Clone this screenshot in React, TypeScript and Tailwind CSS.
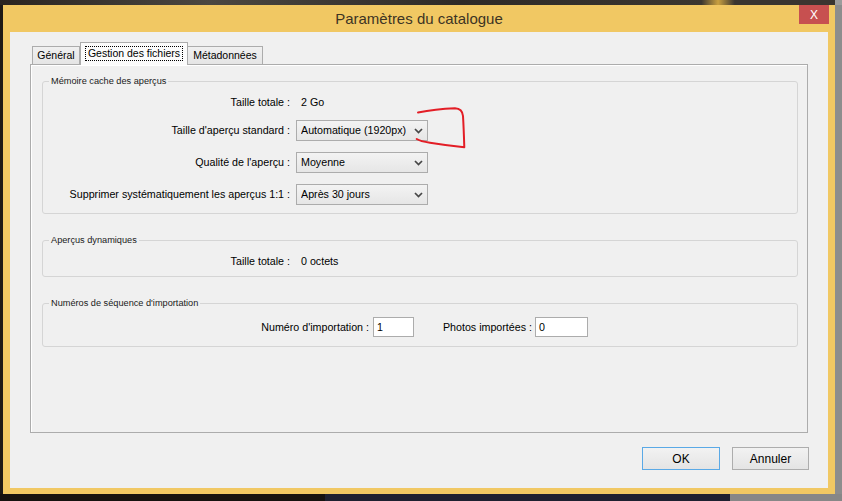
import type { ReactNode } from 'react';

const FONT = "font-['Liberation_Sans',Arial,sans-serif]";

function Chevron() {
  return (
    <svg width="9" height="6" viewBox="0 0 9 6" className="shrink-0">
      <path d="M1 1 L4.5 4.6 L8 1" fill="none" stroke="#474747" strokeWidth="1.7" />
    </svg>
  );
}

function Combo({ value }: { value: string }) {
  return (
    <div className="w-[132px] h-[21px] flex items-center border border-[#acacac] bg-[linear-gradient(#f3f3f3,#e6e6e6)] pl-[4px] pr-[4px]">
      <span className="flex-1 whitespace-nowrap overflow-hidden">{value}</span>
      <Chevron />
    </div>
  );
}

function Group({ title, className, children }: { title: string; className?: string; children: ReactNode }) {
  return (
    <fieldset className={'border border-[#d5d5d5] rounded-[3px] ' + (className ?? '')}>
      <legend className="ml-[6px] px-[2px] text-[9.2px] leading-[12px] text-[#1a1a1a]">{title}</legend>
      {children}
    </fieldset>
  );
}

function Row({ label, children, className }: { label: string; children: ReactNode; className?: string }) {
  return (
    <div className={'flex items-center ' + (className ?? '')}>
      <div className="w-[247px] text-right">{label}</div>
      <div className="ml-[6px]">{children}</div>
    </div>
  );
}

function Tab({ label, active, className }: { label: string; active?: boolean; className?: string }) {
  if (active) {
    return (
      <div className="relative z-10 -mb-px w-[108px] h-[23px] bg-[#fbfbfb] border border-b-0 border-[#acacac] flex justify-center pt-[3px]">
        <span className="h-[15px] px-[2px] border border-dotted border-black leading-[13px]">{label}</span>
      </div>
    );
  }
  return (
    <div
      className={
        'h-[18px] bg-[linear-gradient(#f0f0f0,#e5e5e5)] border border-b-0 border-[#acacac] flex items-center justify-center ' +
        (className ?? '')
      }
    >
      {label}
    </div>
  );
}

function Button({ label, primary }: { label: string; primary?: boolean }) {
  return (
    <div
      className={
        'h-[23px] flex items-center justify-center text-[12px] bg-[linear-gradient(#f2f2f2,#e4e4e4)] border ' +
        (primary ? 'w-[78px] border-[#5aa9e6]' : 'w-[77px] border-[#adadad]')
      }
    >
      {label}
    </div>
  );
}

function Dialog() {
  return (
    <div className="w-[832px] bg-[#f1c863] flex flex-col">
      {/* title bar */}
      <div className="h-[27px] grid grid-cols-[1fr_auto_1fr]">
        <div />
        <div className="self-center text-[15px] text-[#3d3424] pt-px">Paramètres du catalogue</div>
        <div className="flex justify-end items-start">
          <div className="w-[30px] h-[19px] mr-[6px] bg-[#c75050] flex items-center justify-center text-white text-[12px] leading-none">
            X
          </div>
        </div>
      </div>

      {/* client area */}
      <div className="mx-[7px] h-[456px] bg-[#f0f0f0] flex flex-col px-[20px] pt-[10px]">
        <div className="h-[22px] flex items-end pl-[2px] text-[10.5px]">
          <Tab label="Général" className="w-[48px]" />
          <Tab label="Gestion des fichiers" active />
          <Tab label="Métadonnées" className="w-[75px] border-l-0" />
        </div>

        <div className="h-[369px] border border-[#acacac] shadow-[inset_1px_1px_0_#ffffff] bg-[#f0f0f0] pl-[11px] pr-[9px] pt-[10px]">
          <Group title="Mémoire cache des aperçus" className="pt-[5px] pb-[8px]">
            <Row label="Taille totale :" className="h-[20px]">
              <span className="pl-[5px]">2 Go</span>
            </Row>
            <Row label="Taille d'aperçu standard :" className="mt-[8px]">
              <Combo value="Automatique (1920px)" />
            </Row>
            <Row label="Qualité de l'aperçu :" className="mt-[11px]">
              <Combo value="Moyenne" />
            </Row>
            <Row label="Supprimer systématiquement les aperçus 1:1 :" className="mt-[11px]">
              <Combo value="Après 30 jours" />
            </Row>
          </Group>

          <Group title="Aperçus dynamiques" className="mt-[20px] pt-[5px] pb-[5px]">
            <Row label="Taille totale :" className="h-[20px]">
              <span className="pl-[5px]">0 octets</span>
            </Row>
          </Group>

          <Group title="Numéros de séquence d'importation" className="mt-[20px] pt-[8px] pb-[9px]">
            <div className="flex items-center h-[20px]">
              <div className="w-[326px] text-right">Numéro d'importation :</div>
              <div className="ml-[4px] w-[41px] h-[20px] border border-[#acacac] bg-white pl-[3px] flex items-center">1</div>
              <div className="ml-[26px] w-[92px] text-right">Photos importées :</div>
              <div className="ml-[3px] w-[53px] h-[20px] border border-[#acacac] bg-white pl-[3px] flex items-center">0</div>
            </div>
          </Group>
        </div>

        <div className="mt-[14px] -mr-px flex justify-end gap-[12px]">
          <Button label="OK" primary />
          <Button label="Annuler" />
        </div>
      </div>
    </div>
  );
}

export default function App() {
  return (
    <div className={'relative w-[842px] h-[501px] overflow-hidden flex flex-col bg-[#201a16] text-[10.7px] text-black ' + FONT}>
      <div className="h-[5px] flex">
        <div className="flex-1 bg-[linear-gradient(90deg,#2a2420,#4b4741_25%,#2e2a27_55%,#3b3630_84%,#c9a040_86%,#3a3530_88%)]" />
        <div className="w-[7px] bg-[#9c9c9c]" />
      </div>
      <div className="flex h-[489px]">
        <div className="w-[3px] bg-[#1d1915]" />
        <Dialog />
        <div className="flex-1 bg-[#8d8d8d]" />
      </div>
      <div className="flex-1 flex">
        <div className="w-[325px] bg-[#16120f]" />
        <div className="w-[405px] bg-[#1e2030]" />
        <div className="flex-1 bg-[#878787]" />
      </div>

      {/* red hand-drawn annotation */}
      <svg className="absolute left-0 top-0 pointer-events-none" width="842" height="501" viewBox="0 0 842 501">
        <path
          d="M418 112.5 C428 110.5 442 108.8 455 108.3 C460 108.5 462.5 111 463 116 C463.6 126 464 137 464.3 147.3 C455 146.3 440 144.3 430 142.7 C424 141.8 419.5 140.8 416.7 139"
          fill="none"
          stroke="#e31e26"
          strokeWidth="2"
          strokeLinecap="round"
          strokeLinejoin="round"
        />
      </svg>
    </div>
  );
}
